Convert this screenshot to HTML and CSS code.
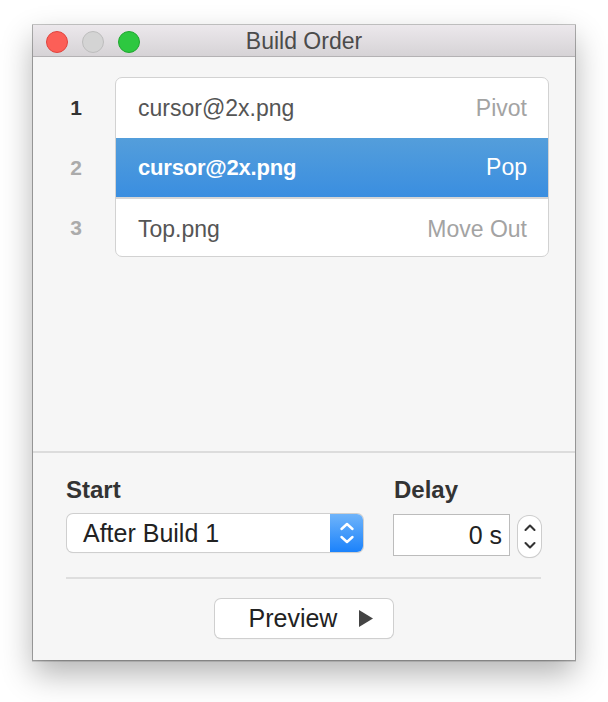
FILE: index.html
```html
<!DOCTYPE html>
<html>
<head>
<meta charset="utf-8">
<link rel="stylesheet" href="styles.css">
</head>
<body>
<div class="window">
  <div class="titlebar">
    <div class="lights">
      <span class="light red"></span>
      <span class="light gray"></span>
      <span class="light green"></span>
    </div>
    <div class="title">Build Order</div>
  </div>
  <div class="list-area">
    <div class="numbers">
      <div class="num active">1</div>
      <div class="num">2</div>
      <div class="num">3</div>
    </div>
    <div class="table">
      <div class="row">
        <span class="name">cursor@2x.png</span>
        <span class="effect">Pivot</span>
      </div>
      <div class="row selected">
        <span class="name">cursor@2x.png</span>
        <span class="effect">Pop</span>
      </div>
      <div class="row">
        <span class="name">Top.png</span>
        <span class="effect">Move Out</span>
      </div>
    </div>
  </div>
  <div class="bottom">
    <div class="controls">
      <div class="group start">
        <div class="label">Start</div>
        <div class="popup">
          <span class="popup-text">After Build 1</span>
          <span class="popup-arrows">
            <svg width="18" height="24" viewBox="0 0 18 24"><path d="M3.5 8 L9 3 L14.5 8" fill="none" stroke="#fff" stroke-width="2.4" stroke-linecap="round" stroke-linejoin="round"/><path d="M3.5 16 L9 21 L14.5 16" fill="none" stroke="#fff" stroke-width="2.4" stroke-linecap="round" stroke-linejoin="round"/></svg>
          </span>
        </div>
      </div>
      <div class="group delay">
        <div class="label">Delay</div>
        <div class="delay-row">
          <div class="field">0 s</div>
          <div class="stepper">
            <svg width="14" height="30" viewBox="0 0 14 30"><path d="M2.5 8 L7 3.5 L11.5 8" fill="none" stroke="#333" stroke-width="2.1" stroke-linecap="round" stroke-linejoin="round"/><path d="M2.5 21 L7 25.5 L11.5 21" fill="none" stroke="#333" stroke-width="2.1" stroke-linecap="round" stroke-linejoin="round"/></svg>
          </div>
        </div>
      </div>
    </div>
    <div class="divider"></div>
    <div class="button-row">
      <div class="preview">
        <span>Preview</span>
        <svg class="play" width="14" height="17" viewBox="0 0 14 17"><path d="M0 0 L14 8.5 L0 17 Z" fill="#444"/></svg>
      </div>
    </div>
  </div>
</div>
</body>
</html>
```

FILE: styles.css
```css
html, body {
  margin: 0;
  padding: 0;
  background: #ffffff;
}
body {
  font-family: "Liberation Sans", Arial, sans-serif;
  width: 608px;
  height: 702px;
  overflow: hidden;
}
.window {
  margin: 25px 0 0 33px;
  width: 542px;
  height: 635px;
  background: #f6f6f6;
  box-shadow: 0 0 0 1px rgba(0,0,0,0.22), 0 1px 0 1px rgba(0,0,0,0.12), 0 14px 30px rgba(0,0,0,0.3);
  display: flex;
  flex-direction: column;
}
.titlebar {
  height: 31px;
  flex: none;
  background: linear-gradient(#ece8ec, #d6d3d6);
  border-bottom: 1px solid #b4b2b4;
  position: relative;
  display: flex;
  align-items: center;
  justify-content: center;
}
.lights {
  position: absolute;
  left: 13px;
  top: 6px;
  display: flex;
  gap: 14px;
}
.light {
  width: 20px;
  height: 20px;
  border-radius: 50%;
  display: block;
}
.red { background: #fc5f57; border: 1px solid #e0443e; }
.gray { background: #d4d4d4; border: 1px solid #bdbdbd; }
.green { background: #2dc840; border: 1px solid #20a730; }
.title {
  font-size: 23px;
  color: #4b4b4b;
  padding-top: 2px;
}
.list-area {
  height: 396px;
  flex: none;
  border-bottom: 2px solid #dcdcdc;
  box-sizing: border-box;
  padding-top: 20px;
  display: flex;
}
.numbers {
  width: 82px;
  padding-top: 1px;
  padding-left: 4px;
  box-sizing: border-box;
}
.num {
  height: 60px;
  line-height: 60px;
  text-align: center;
  font-size: 21px;
  font-weight: bold;
  color: #ababab;
}
.num.active { color: #333; }
.table {
  width: 434px;
  height: 180px;
  box-sizing: border-box;
  border: 1px solid #d2d2d2;
  border-radius: 7px;
  background: #fff;
  overflow: hidden;
}
.row {
  height: 60px;
  display: flex;
  align-items: center;
  justify-content: space-between;
  padding: 0 21px 0 22px;
  font-size: 23px;
}
.row .name { color: #555; }
.row .effect { color: #a3a3a3; }
.row.selected {
  background: linear-gradient(#549edb, #3a8ee0);
  border-bottom: 2px solid #d6d6d6;
  height: 59px;
}
.row.selected .name { color: #fff; font-weight: bold; font-size: 22px; letter-spacing: -0.2px; }
.row.selected .effect { color: #fff; }
.bottom {
  flex: 1;
  padding: 0 34px 0 33px;
}
.controls {
  display: flex;
  justify-content: space-between;
  padding-top: 23px;
}
.label {
  font-size: 24px;
  font-weight: bold;
  color: #333;
  line-height: 28px;
  margin-bottom: 10px;
}
.popup {
  width: 296px;
  height: 38px;
  margin: 1px 0 0 1px;
  box-sizing: border-box;
  border-radius: 6px;
  background: #fff;
  box-shadow: 0 0 0 1px #cfcfcf, 0 1px 1px rgba(0,0,0,0.15);
  display: flex;
  align-items: center;
  overflow: hidden;
}
.popup-text {
  flex: 1;
  padding-left: 16px;
  font-size: 25px;
  color: #222;
}
.popup-arrows {
  width: 33px;
  height: 38px;
  background: linear-gradient(#6fb4fa, #1b82fb);
  display: flex;
  align-items: center;
  justify-content: center;
}
.delay .label { padding-left: 1px; }
.delay-row {
  display: flex;
  align-items: flex-start;
  gap: 8px;
}
.field {
  width: 117px;
  height: 42px;
  box-sizing: border-box;
  border: 1px solid #bcbcbc;
  background: #fff;
  text-align: right;
  padding-right: 7px;
  font-size: 25px;
  line-height: 40px;
  color: #222;
}
.stepper {
  width: 23px;
  height: 41px;
  box-sizing: border-box;
  border-radius: 11px;
  background: #fff;
  box-shadow: 0 0 0 1px #cdcdcd, 0 1px 1px rgba(0,0,0,0.15);
  display: flex;
  align-items: center;
  justify-content: center;
  margin-top: 2px;
}
.divider {
  height: 2px;
  background: #dedede;
  margin-top: 20px;
}
.button-row {
  display: flex;
  justify-content: center;
  padding-top: 20px;
}
.preview {
  width: 178px;
  height: 39px;
  box-sizing: border-box;
  border-radius: 6px;
  background: #fff;
  box-shadow: 0 0 0 1px #cfcfcf, 0 1px 1px rgba(0,0,0,0.18);
  display: flex;
  align-items: center;
  padding-left: 34px;
  font-size: 25px;
  color: #222;
}
.play { margin-left: 22px; }
```
